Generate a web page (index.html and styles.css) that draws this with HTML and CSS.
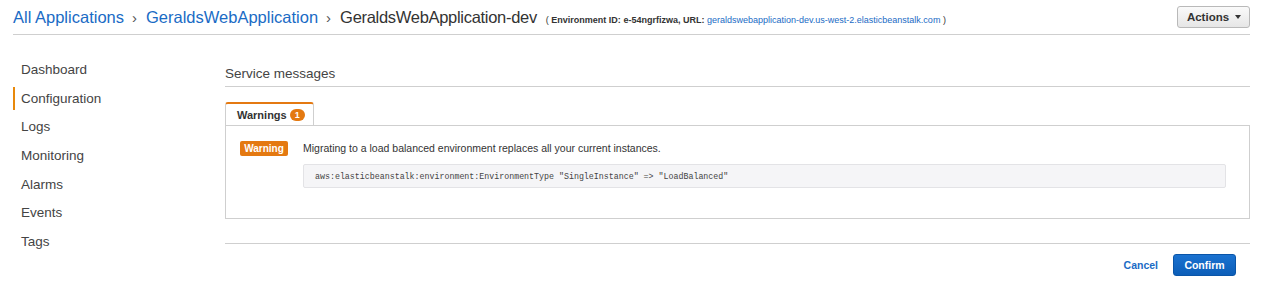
FILE: index.html
```html
<!DOCTYPE html>
<html lang="en">
<head>
<meta charset="utf-8">
<title>GeraldsWebApplication-dev</title>
<link rel="stylesheet" href="styles.css">
</head>
<body>
<div class="page">
  <header class="header">
    <nav class="crumbs">
      <a class="crumb-link" href="#">All Applications</a>
      <span class="sep">&#8250;</span>
      <a class="crumb-link" href="#">GeraldsWebApplication</a>
      <span class="sep">&#8250;</span>
      <span class="crumb-current">GeraldsWebApplication-dev</span>
      <span class="env-info">( <b>Environment ID:</b> <b>e-54ngrfizwa,</b> <b>URL:</b> <a class="env-link" href="#">geraldswebapplication-dev.us-west-2.elasticbeanstalk.com</a> )</span>
    </nav>
    <button class="actions">Actions <span class="caret"></span></button>
  </header>
  <div class="body-row">
    <aside class="sidebar">
      <a class="side-item" href="#">Dashboard</a>
      <a class="side-item active" href="#">Configuration</a>
      <a class="side-item" href="#">Logs</a>
      <a class="side-item" href="#">Monitoring</a>
      <a class="side-item" href="#">Alarms</a>
      <a class="side-item" href="#">Events</a>
      <a class="side-item" href="#">Tags</a>
    </aside>
    <main class="main">
      <h2 class="section-title">Service messages</h2>
      <div class="tabs">
        <div class="tab">Warnings <span class="badge">1</span></div>
      </div>
      <div class="panel">
        <div class="message-row">
          <span class="label-warning">Warning</span>
          <div class="message-body">
            <p class="message-text">Migrating to a load balanced environment replaces all your current instances.</p>
            <pre class="code">aws:elasticbeanstalk:environment:EnvironmentType "SingleInstance" =&gt; "LoadBalanced"</pre>
          </div>
        </div>
      </div>
      <div class="footer">
        <a class="cancel" href="#">Cancel</a>
        <button class="confirm">Confirm</button>
      </div>
    </main>
  </div>
</div>
</body>
</html>
```
FILE: styles.css
```css
* { box-sizing: border-box; }
html, body { margin: 0; padding: 0; background: #fff; }
body {
  font-family: "Liberation Sans", Arial, sans-serif;
  color: #333;
}
a { text-decoration: none; }

.page {
  width: 1250px;
  padding-left: 13px;
}

.header {
  height: 35px;
  border-bottom: 1px solid #cfcfcf;
  display: flex;
  align-items: center;
  justify-content: space-between;
}
.crumbs {
  display: flex;
  align-items: baseline;
  font-size: 16.5px;
  padding-top: 1px;
}
.crumb-link { color: #1a6bc5; }
.crumb-current { color: #333; letter-spacing: -0.3px; }
.sep {
  color: #555;
  font-size: 15px;
  margin: 0 9px 0 8px;
}
.env-info {
  font-size: 9px;
  color: #333;
  margin-left: 9px;
}
.env-info b { font-weight: bold; }
.env-link { color: #1a6bc5; }

.actions {
  width: 73px;
  height: 22px;
  margin-bottom: 1px;
  border: 1px solid #b9b9b9;
  border-radius: 3px;
  background: linear-gradient(#fafafa, #e6e6e6);
  font-family: "Liberation Sans", Arial, sans-serif;
  font-weight: bold;
  font-size: 11.5px;
  color: #333;
  padding: 0 0 0 1px;
  display: flex;
  align-items: center;
  justify-content: center;
  gap: 6px;
}
.caret {
  width: 0;
  height: 0;
  border-left: 3.5px solid transparent;
  border-right: 3.5px solid transparent;
  border-top: 4px solid #333;
  margin-top: 1px;
}

.body-row {
  display: flex;
}
.sidebar {
  width: 212px;
  flex: none;
  display: flex;
  flex-direction: column;
  gap: 5.67px;
  padding-top: 23px;
}
.side-item {
  display: block;
  font-size: 13.5px;
  line-height: 23px;
  color: #444;
  padding-left: 6px;
  border-left: 2px solid transparent;
}
.side-item.active {
  border-left-color: #e8890c;
}

.main {
  flex: 1;
}
.section-title {
  margin: 30px 0 0;
  font-size: 13.5px;
  font-weight: normal;
  color: #444;
  line-height: 18px;
  padding-bottom: 3px;
  border-bottom: 1px solid #cfcfcf;
}
.tabs {
  display: flex;
  margin-top: 15px;
}
.tab {
  width: 89px;
  height: 23px;
  border: 1px solid #cfcfcf;
  border-top: 2px solid #e47911;
  border-bottom: none;
  border-radius: 3px 3px 0 0;
  font-size: 11px;
  font-weight: bold;
  color: #333;
  display: flex;
  align-items: center;
  padding-left: 11px;
  gap: 3px;
  padding-top: 1px;
}
.badge {
  display: inline-flex;
  align-items: center;
  justify-content: center;
  width: 15px;
  height: 12px;
  border-radius: 6px;
  background: #e47911;
  color: #fff;
  font-size: 9px;
  font-weight: bold;
}
.panel {
  border: 1px solid #cfcfcf;
  height: 94px;
  padding: 15px 23px 0 14px;
}
.message-row {
  display: flex;
  align-items: flex-start;
}
.label-warning {
  flex: none;
  width: 48px;
  height: 15px;
  background: #e47911;
  color: #fff;
  font-size: 10px;
  font-weight: bold;
  border-radius: 2px;
  display: flex;
  align-items: center;
  justify-content: center;
}
.message-body {
  flex: 1;
  margin-left: 15px;
}
.message-text {
  margin: 0;
  font-size: 10.5px;
  line-height: 15px;
  color: #333;
}
.code {
  margin: 8px 0 0;
  height: 24px;
  background: #f5f5f7;
  border: 1px solid #e3e3e6;
  border-radius: 2px;
  padding: 0 11px;
  font-family: "Liberation Mono", "DejaVu Sans Mono", monospace;
  font-size: 8.3px;
  line-height: 23px;
  color: #444;
}
.footer {
  margin-top: 24px;
  border-top: 1px solid #cfcfcf;
  display: flex;
  justify-content: flex-end;
  align-items: center;
  padding: 10px 14px 0 0;
  gap: 15px;
}
.cancel {
  color: #1a6bc5;
  font-size: 10.5px;
  font-weight: bold;
}
.confirm {
  width: 63px;
  height: 22px;
  border: 1px solid #0a55a8;
  border-radius: 3px;
  background: linear-gradient(#1b72d0, #0c5eb8);
  color: #fff;
  font-family: "Liberation Sans", Arial, sans-serif;
  font-size: 10.5px;
  font-weight: bold;
  padding: 0;
}
```
